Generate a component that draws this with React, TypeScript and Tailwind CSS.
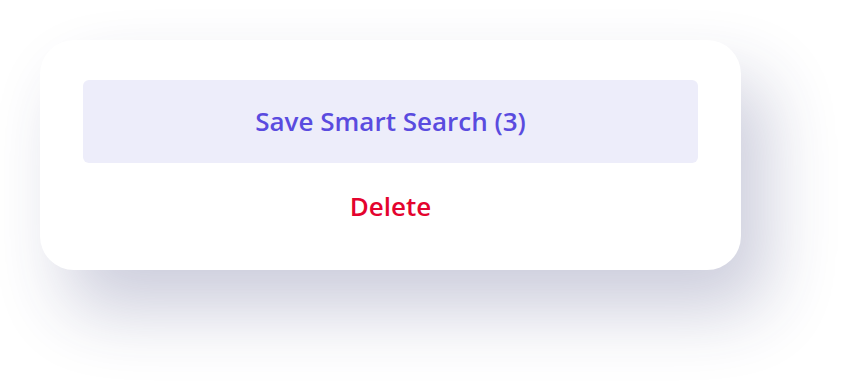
import React from 'react'

export default function App() {
  return (
    <div className="w-[861px] h-[390px] bg-white" style={{ fontFamily: '"Open Sans", "Noto Sans", sans-serif' }}>
      <div className="pt-10 pl-10">
        <div className="w-[701px] h-[230px] bg-white rounded-[34px] shadow-[26px_40px_70px_rgba(40,45,110,0.24)] px-[43px] pt-10 flex flex-col">
          <button className="w-full h-[83px] rounded-md bg-[#ededfa] text-[#5a4bdf] text-[26px] font-semibold">
            Save Smart Search (3)
          </button>
          <button className="mt-[27px] h-8 leading-8 text-[26px] font-semibold text-[#e4032e] self-center">
            Delete
          </button>
        </div>
      </div>
    </div>
  )
}
